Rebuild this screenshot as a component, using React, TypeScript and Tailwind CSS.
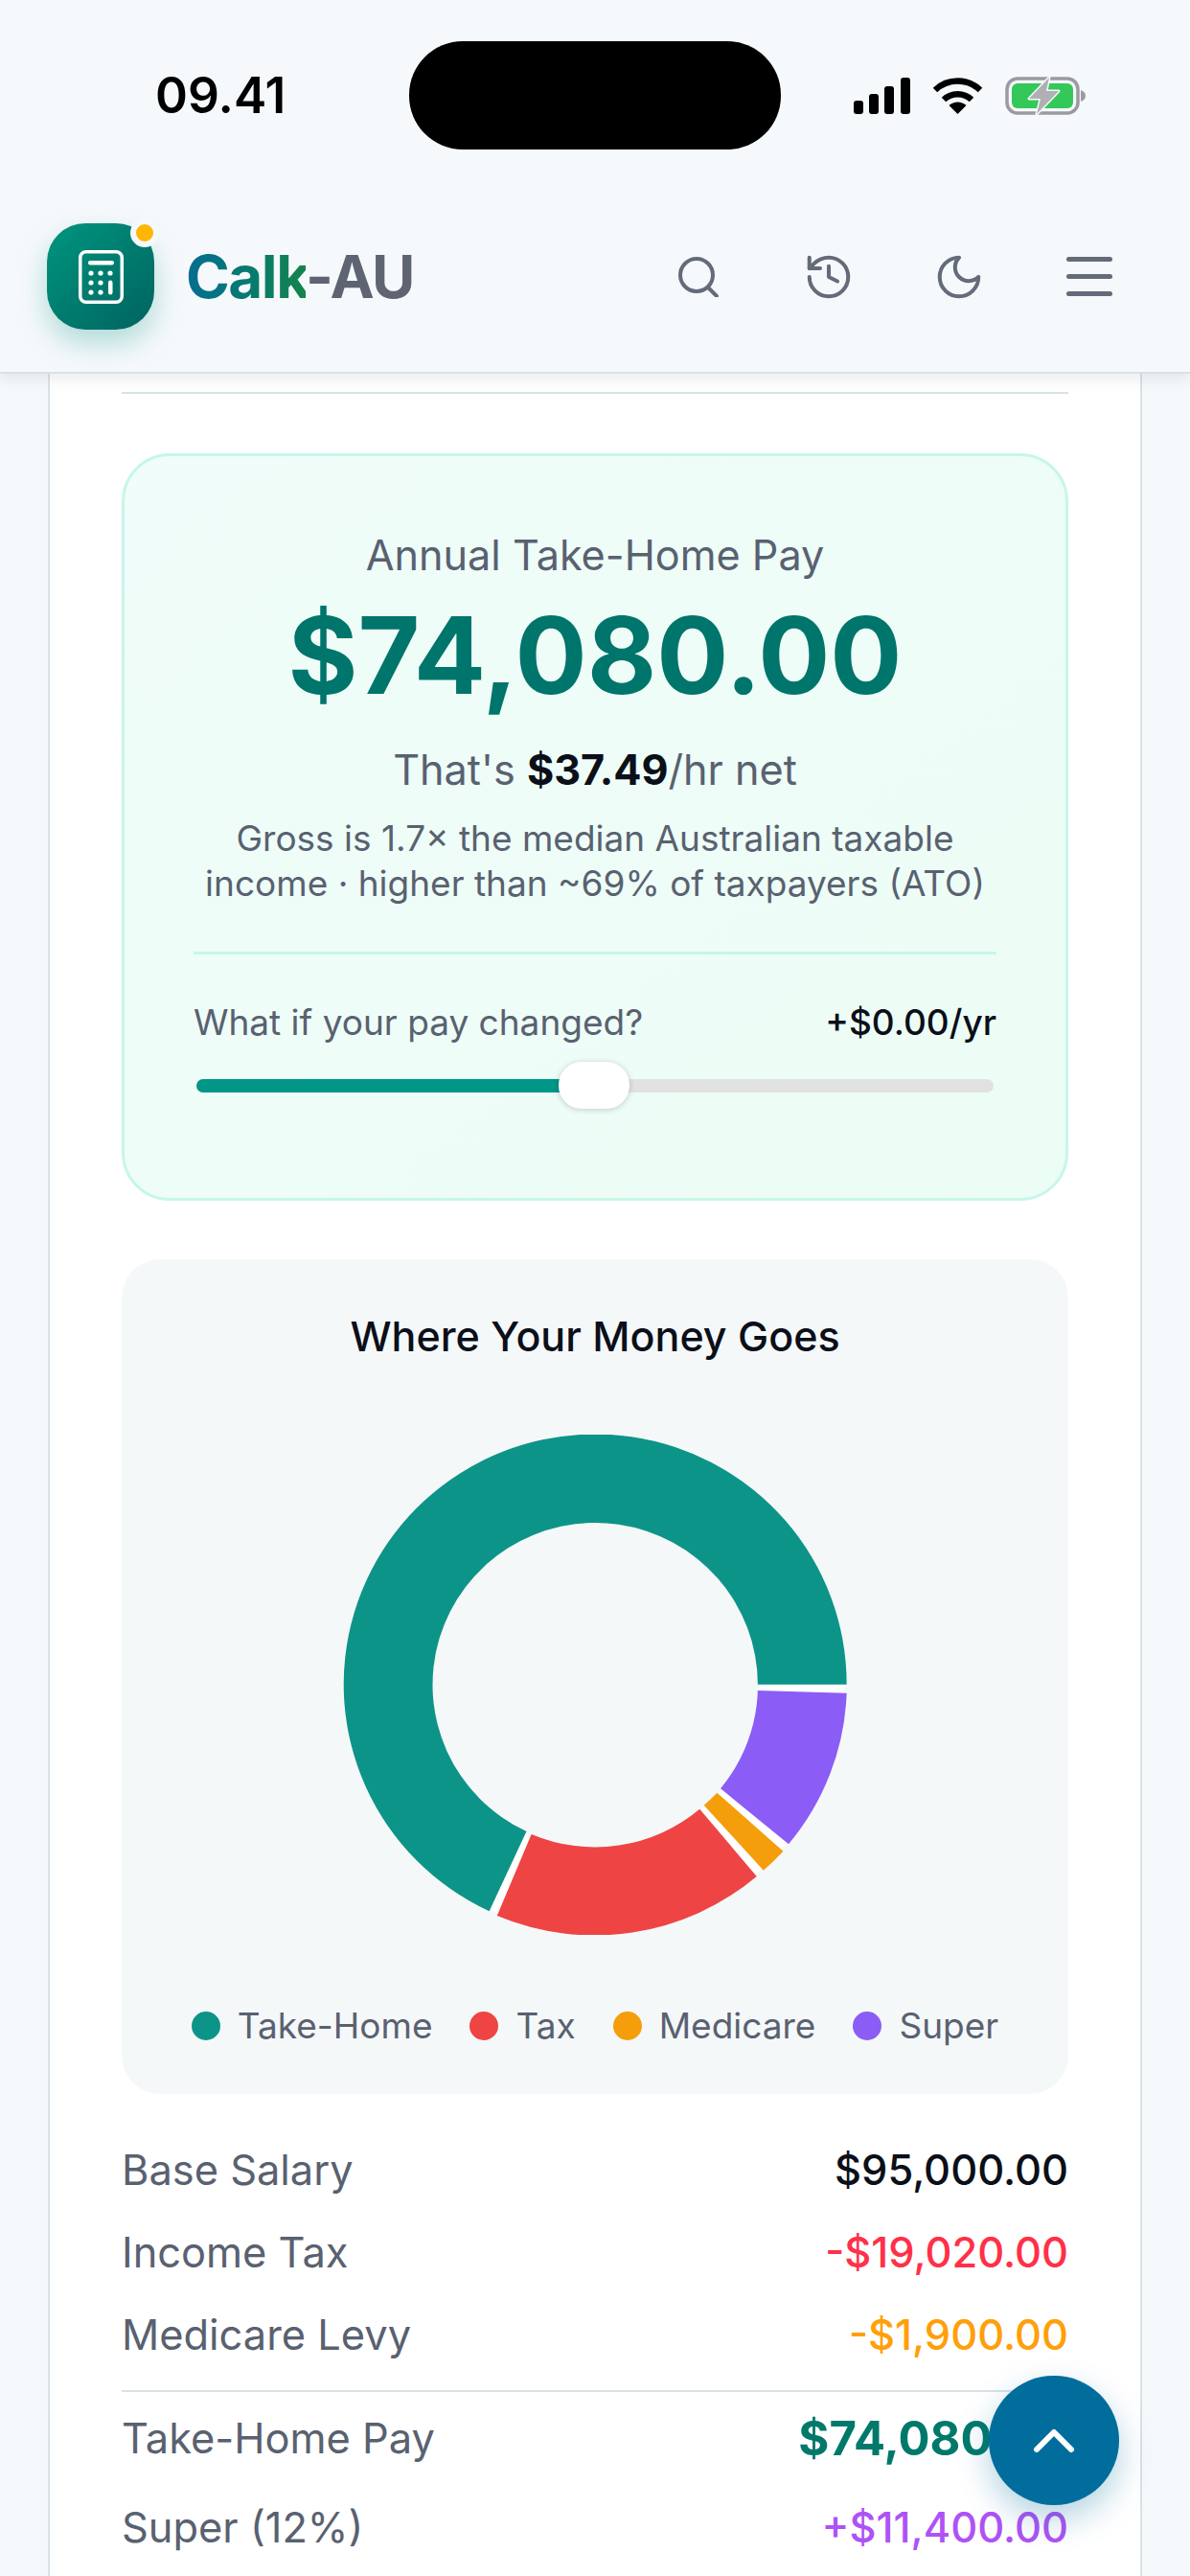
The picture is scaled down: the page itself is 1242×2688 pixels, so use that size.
import { Fragment } from 'react';
import { ChevronUp } from 'lucide-react';

const legend = [
  { label: 'Take-Home', dot: 'bg-[#0d9488]' },
  { label: 'Tax', dot: 'bg-[#ef4444]' },
  { label: 'Medicare', dot: 'bg-[#f59e0b]' },
  { label: 'Super', dot: 'bg-[#8b5cf6]' },
];

const rowsTop = [
  { label: 'Base Salary', value: '$95,000.00', tone: 'text-[43.4px] text-[#0b0f19] font-medium' },
  { label: 'Income Tax', value: '-$19,020.00', tone: 'text-[43.4px] text-[#ff3048] font-medium' },
  { label: 'Medicare Levy', value: '-$1,900.00', tone: 'text-[43.4px] text-[#ff9f0a] font-medium' },
];

const rowsBottom = [
  { label: 'Take-Home Pay', value: '$74,080.00', tone: 'text-[49px] text-[#00796b] font-bold' },
  { label: 'Super (12%)', value: '+$11,400.00', tone: 'text-[43.4px] text-[#af52f5] font-medium' },
];

function Signal() {
  return (
    <svg width="59" height="38" viewBox="0 0 59 38" fill="#000">
      <rect x="0" y="24" width="10" height="14" rx="3" />
      <rect x="16" y="17" width="10" height="21" rx="3" />
      <rect x="32" y="9" width="10" height="29" rx="3" />
      <rect x="49" y="0" width="10" height="38" rx="3" />
    </svg>
  );
}

function Wifi() {
  return (
    <svg width="53" height="38" viewBox="0 0 53 38" fill="none" stroke="#000" strokeWidth="6.5">
      <path d="M3 13A34 34 0 0 1 50 13" />
      <path d="M12 23A21 21 0 0 1 41 23" />
      <path d="M26.5 38L17.5 29A13 13 0 0 1 35.5 29Z" fill="#000" stroke="none" />
    </svg>
  );
}

function Battery() {
  return (
    <svg width="84" height="40" viewBox="0 0 84 40" fill="none">
      <rect x="2" y="2" width="74" height="36" rx="11" stroke="#9b9b9f" strokeWidth="3.5" />
      <rect x="7" y="7" width="64" height="26" rx="6" fill="#34c759" />
      <path d="M79 14C82 15 84 17 84 20C84 23 82 25 79 26Z" fill="#9b9b9f" />
      <path d="M46 1L25 23H37L33 39L56 15H43Z" fill="#b0b0b4" stroke="#f6f9fb" strokeWidth="3" paintOrder="stroke" strokeLinejoin="round" />
    </svg>
  );
}

function Logo() {
  return (
    <div className="relative flex h-[111px] w-[112px] items-center justify-center rounded-[40px] bg-gradient-to-br from-[#00967f] to-[#00635f] shadow-[0_14px_30px_rgba(13,148,136,0.3)]">
      <svg width="47" height="56" viewBox="0 0 47 56" fill="#fff">
        <rect x="1.75" y="1.75" width="43.5" height="52.5" rx="6" fill="none" stroke="#fff" strokeWidth="3.5" />
        <rect x="10" y="11" width="27" height="4.5" rx="2.2" />
        <circle cx="13" cy="24" r="2.6" />
        <circle cx="23" cy="24" r="2.6" />
        <circle cx="33" cy="24" r="2.6" />
        <circle cx="13" cy="34" r="2.6" />
        <circle cx="23" cy="34" r="2.6" />
        <circle cx="13" cy="44" r="2.6" />
        <circle cx="23" cy="44" r="2.6" />
        <rect x="31" y="31.5" width="4.5" height="15" rx="2.2" />
      </svg>
      <span className="absolute -right-[5px] -top-[5px] h-[30px] w-[30px] rounded-full border-[6px] border-[#f6f9fb] bg-[#ffb703]" />
    </div>
  );
}

function NavIcons() {
  return (
    <div className="flex items-center pr-[37px] text-[#646b79]">
      <div className="flex w-[136px] justify-center">
        <svg width="42" height="42" viewBox="0 0 42 42" fill="none" stroke="currentColor" strokeWidth="4" strokeLinecap="round">
          <circle cx="19" cy="19" r="17" />
          <path d="M31 32L40 41" />
        </svg>
      </div>
      <div className="flex w-[136px] justify-center">
        <svg width="54" height="54" viewBox="0 0 24 24" fill="none" stroke="currentColor" strokeWidth="1.8" strokeLinecap="round" strokeLinejoin="round">
          <path d="M3 12a9 9 0 1 0 9-9 9.75 9.75 0 0 0-6.74 2.74L3 8" />
          <path d="M3 3v5h5" />
          <path d="M12 7v5l4 2" />
        </svg>
      </div>
      <div className="flex w-[136px] justify-center">
        <svg width="54" height="54" viewBox="0 0 24 24" fill="none" stroke="currentColor" strokeWidth="1.8" strokeLinecap="round" strokeLinejoin="round">
          <path d="M12 3a6 6 0 0 0 9 9 9 9 0 1 1-9-9Z" />
        </svg>
      </div>
      <div className="flex w-[136px] justify-center">
        <div className="flex h-[41px] w-[48px] flex-col justify-between">
          <span className="h-[5px] rounded-full bg-current" />
          <span className="h-[5px] rounded-full bg-current" />
          <span className="h-[5px] rounded-full bg-current" />
        </div>
      </div>
    </div>
  );
}

function Donut() {
  return (
    <svg width="526" height="522" viewBox="76 100 1421 1412" className="mx-auto mt-[75px] block">
      <circle cx="787" cy="806" r="582" fill="none" stroke="#ffffff" strokeWidth="240" />
      <path d="M1497 805A710 706 0 1 0 488 1445L593 1220A459 457 0 1 1 1246 805Z" fill="#0d9488" />
      <path d="M510 1458A710 706 0 0 0 1243 1347L1082 1157A459 457 0 0 1 607 1228Z" fill="#ef4444" />
      <path d="M1262 1330A710 706 0 0 0 1318 1276L1131 1111A459 457 0 0 1 1094 1146Z" fill="#f59e0b" />
      <path d="M1333 1256A710 706 0 0 0 1497 830L1246 822A459 457 0 0 1 1141 1099Z" fill="#8b5cf6" />
    </svg>
  );
}

function Row({ label, value, tone }: { label: string; value: string; tone: string }) {
  return (
    <div className="flex h-[86px] items-center justify-between">
      <span className="text-[43.4px] text-[#596170]">{label}</span>
      <span className={tone}>{value}</span>
    </div>
  );
}

export default function App() {
  return (
    <div className="relative h-[2688px] w-[1242px] overflow-hidden bg-[#f6f9fb] font-['Inter',sans-serif]">
      {/* Header */}
      <header className="relative z-10 h-[390px] border-b-2 border-[#d8e2e8] bg-[#f6f9fb] pt-[43px] shadow-[0_6px_14px_rgba(15,23,42,0.08)]">
        <div className="grid h-[113px] grid-cols-[427px_388px_1fr] items-center">
          <span className="pl-[162px] text-[51.5px] leading-none font-semibold text-black">09.41</span>
          <div className="h-[113px] rounded-[56px] bg-black" />
          <div className="flex items-center gap-[23px] pl-[76px]">
            <Signal />
            <Wifi />
            <Battery />
          </div>
        </div>
        <div className="mt-[77px] flex items-center justify-between pl-[49px]">
          <div className="flex items-center gap-[33px]">
            <Logo />
            <span className="text-[62px] leading-none font-bold tracking-[-1.5px]">
              <span className="bg-gradient-to-r from-[#076d92] to-[#16834a] bg-clip-text text-transparent">Calk</span>
              <span className="text-[#5e6472]">-AU</span>
            </span>
          </div>
          <NavIcons />
        </div>
      </header>

      {/* Page card */}
      <main className="ml-[50px] h-[2298px] w-[1142px] border-x-2 border-[#d8e2e8] bg-white px-[75px] pt-[19px]">
        <div className="h-[2px] bg-[#d8e2e8]" />

        {/* Result */}
        <section className="mt-[62px] h-[780px] rounded-[50px] border-[3px] border-[#c6f6ea] bg-gradient-to-br from-[#f0fdfa] to-[#ecfdf5] px-[72px] pt-[73px] text-center">
          <p className="text-[43.2px] leading-[60px] text-[#596170]">Annual Take-Home Pay</p>
          <p className="mt-[10px] text-[111.5px] leading-[130px] font-bold text-[#00756b]">$74,080.00</p>
          <p className="mt-[24px] text-[43.2px] leading-[60px] text-[#596170]">
            That's <strong className="font-bold text-[#0b0f19]">$37.49</strong>/hr net
          </p>
          <p className="mt-[18px] text-[37px] leading-[47px] text-[#596170]">
            Gross is 1.7× the median Australian taxable income · higher than ~69% of taxpayers (ATO)
          </p>
          <div className="mt-[48px] h-[3px] bg-[#c6f6ea]" />
          <div className="mt-[46px] flex items-center justify-between text-[37px] leading-[50px]">
            <span className="text-[#596170]">What if your pay changed?</span>
            <span className="font-medium text-[#0b0f19]">+$0.00/yr</span>
          </div>
          <div className="relative mt-[16px] flex h-[49px] items-center px-[3px]">
            <div className="h-[14px] w-full overflow-hidden rounded-full bg-[#e2e2e2]">
              <div className="h-full w-1/2 bg-[#009688]" />
            </div>
            <div className="absolute left-[381px] top-0 h-[49px] w-[74px] rounded-[24px] bg-white shadow-[0_1px_6px_rgba(0,0,0,0.2)]" />
          </div>
        </section>

        {/* Chart */}
        <section className="mt-[61px] h-[871px] rounded-[40px] bg-[#f5f8f9] pt-[52px]">
          <h2 className="text-center text-[43px] leading-[56px] font-medium text-[#0b0f19]">Where Your Money Goes</h2>
          <Donut />
          <div className="mt-[73px] flex items-center justify-center gap-[39px]">
            {legend.map((item) => (
              <div key={item.label} className="flex items-center gap-[18px]">
                <span className={`h-[30px] w-[30px] rounded-full ${item.dot}`} />
                <span className="text-[37px] leading-[44px] text-[#596170]">{item.label}</span>
              </div>
            ))}
          </div>
        </section>

        {/* Breakdown */}
        <section className="mt-[37px]">
          {rowsTop.map((row) => (
            <Fragment key={row.label}>
              <Row {...row} />
            </Fragment>
          ))}
          <div className="mb-[6px] mt-[14px] h-[2px] bg-[#d8e2e8]" />
          <Row {...rowsBottom[0]} />
          <div className="mt-[7px]">
            <Row {...rowsBottom[1]} />
          </div>
        </section>
      </main>

      <button className="absolute left-[1032px] top-[2479px] z-20 flex h-[135px] w-[136px] items-center justify-center rounded-full bg-[#006d9c] text-white shadow-[0_14px_34px_rgba(0,109,156,0.3)]">
        <ChevronUp size={72} strokeWidth={2} />
      </button>
    </div>
  );
}
